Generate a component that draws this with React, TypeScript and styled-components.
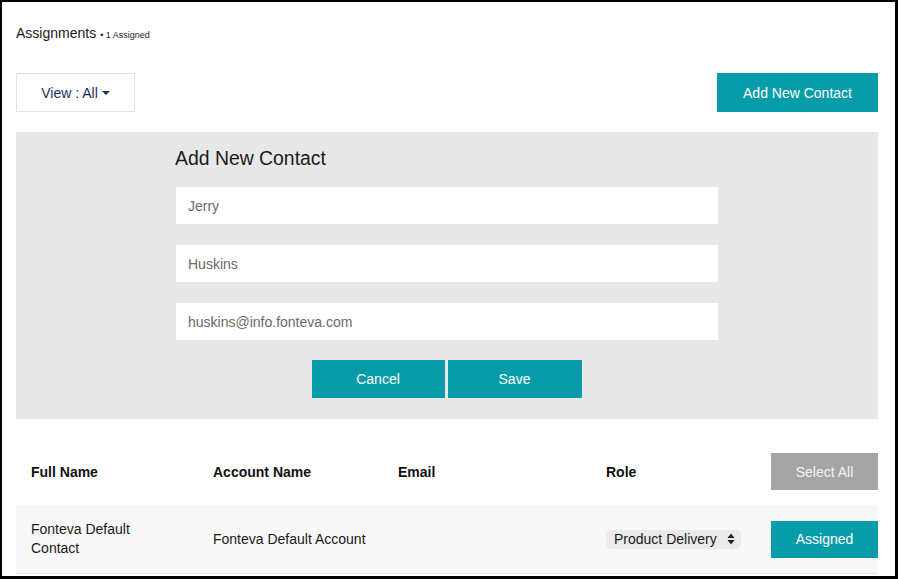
import React from "react";
import styled, { createGlobalStyle } from "styled-components";

const Global = createGlobalStyle`
  html, body { margin: 0; padding: 0; background: #fff; }
  body { font-family: "Liberation Sans", Arial, sans-serif; }
  * { box-sizing: border-box; }
`;

const TEAL = "#079ca8";

const Frame = styled.div`
  width: 898px;
  height: 579px;
  border-style: solid;
  border-color: #000;
  border-width: 2px 3px 3px 2px;
  overflow: hidden;
  padding: 21px 17px 0 14px;
  display: flex;
  flex-direction: column;
`;

const TitleLine = styled.div`
  display: flex;
  align-items: baseline;
  height: 20px;
  line-height: 20px;
  color: #1a1a1a;
`;

const Title = styled.span`
  font-size: 14px;
`;

const Sub = styled.span`
  font-size: 9px;
  margin-left: 4px;
  color: #222;
`;

const Toolbar = styled.div`
  margin-top: 30px;
  display: flex;
  justify-content: space-between;
  align-items: center;
`;

const ViewButton = styled.button`
  width: 119px;
  height: 39px;
  background: #fff;
  border: 1px solid #e2e2e2;
  color: #16325c;
  font-family: inherit;
  font-size: 14px;
  display: flex;
  align-items: center;
  justify-content: center;
  gap: 4px;
  padding: 0;
`;

const Caret = styled.span`
  width: 0;
  height: 0;
  border-left: 4px solid transparent;
  border-right: 4px solid transparent;
  border-top: 4px solid #16325c;
  margin-top: 1px;
`;

const TealButton = styled.button<{ $w: number; $h?: number }>`
  width: ${(p) => p.$w}px;
  height: ${(p) => p.$h ?? 38}px;
  background: ${TEAL};
  border: none;
  color: #fff;
  font-family: inherit;
  font-size: 14px;
  padding: 0;
`;

const Panel = styled.div`
  margin-top: 20px;
  background: #e8e8e8;
  height: 287px;
  padding: 15px 160px 21px 159px;
  display: flex;
  flex-direction: column;
`;

const PanelHeading = styled.div`
  font-size: 19.4px;
  line-height: 22px;
  color: #1a1a1a;
`;

const Fields = styled.div`
  margin-top: 18px;
  display: flex;
  flex-direction: column;
  gap: 21px;
  padding-left: 1px;
`;

const Field = styled.div`
  height: 37px;
  background: #fff;
  color: #6a6a6a;
  font-size: 14px;
  display: flex;
  align-items: center;
  padding-left: 12px;
`;

const Actions = styled.div`
  margin-top: 20px;
  display: flex;
  justify-content: center;
  gap: 3px;
`;

const Table = styled.div`
  margin-top: 34px;
  display: flex;
  flex-direction: column;
`;

const Columns = "182px 185px 208px 165px 107px";

const HeaderRow = styled.div`
  display: grid;
  grid-template-columns: ${Columns};
  padding-left: 15px;
  height: 37px;
  align-items: center;
  font-size: 14px;
  font-weight: bold;
  color: #111;
`;

const HeaderCell = styled.div`
  padding-top: 1px;
`;

const GrayButton = styled.button`
  height: 37px;
  background: #a5a5a5;
  border: none;
  color: #f4f4f4;
  font-family: inherit;
  font-size: 14px;
  padding: 0;
`;

const Row = styled.div`
  margin-top: 15px;
  display: grid;
  grid-template-columns: ${Columns};
  padding-left: 15px;
  height: 69px;
  align-items: center;
  background: #f8f8f8;
  border-bottom: 1px solid #e6e6e6;
  font-size: 14px;
  color: #1a1a1a;
`;

const Cell = styled.div`
  line-height: 19px;
`;

const Select = styled.div`
  width: 135px;
  height: 19px;
  background: #ebebeb;
  border-radius: 5px;
  display: flex;
  align-items: center;
  justify-content: space-between;
  padding: 0 6px 0 8px;
  font-size: 14px;
  color: #1a1a1a;
`;

const AssignedButton = styled.button`
  height: 37px;
  background: ${TEAL};
  border: none;
  color: #fff;
  font-family: inherit;
  font-size: 14px;
  padding: 0;
`;

const Arrows = () => (
  <svg width="8" height="12" viewBox="0 0 8 12">
    <path d="M4 0.5 L7.5 5 L0.5 5 Z" fill="#222" />
    <path d="M4 11.5 L7.5 7 L0.5 7 Z" fill="#222" />
  </svg>
);

export default function App() {
  return (
    <>
      <Global />
      <Frame>
        <TitleLine>
          <Title>Assignments</Title>
          <Sub>• 1 Assigned</Sub>
        </TitleLine>
        <Toolbar>
          <ViewButton>
            View : All <Caret />
          </ViewButton>
          <TealButton $w={161} $h={39}>Add New Contact</TealButton>
        </Toolbar>
        <Panel>
          <PanelHeading>Add New Contact</PanelHeading>
          <Fields>
            <Field>Jerry</Field>
            <Field>Huskins</Field>
            <Field>huskins@info.fonteva.com</Field>
          </Fields>
          <Actions>
            <TealButton $w={133}>Cancel</TealButton>
            <TealButton $w={134}>Save</TealButton>
          </Actions>
        </Panel>
        <Table>
          <HeaderRow>
            <HeaderCell>Full Name</HeaderCell>
            <HeaderCell>Account Name</HeaderCell>
            <HeaderCell>Email</HeaderCell>
            <HeaderCell>Role</HeaderCell>
            <GrayButton>Select All</GrayButton>
          </HeaderRow>
          <Row>
            <Cell>
              Fonteva Default
              <br />
              Contact
            </Cell>
            <Cell>Fonteva Default Account</Cell>
            <Cell />
            <Cell>
              <Select>
                <span>Product Delivery</span>
                <Arrows />
              </Select>
            </Cell>
            <AssignedButton>Assigned</AssignedButton>
          </Row>
        </Table>
      </Frame>
    </>
  );
}
